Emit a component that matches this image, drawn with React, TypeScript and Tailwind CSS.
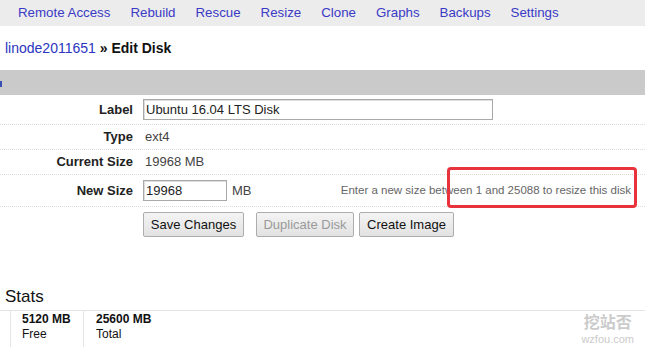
const navItems = ["Remote Access", "Rebuild", "Rescue", "Resize", "Clone", "Graphs", "Backups", "Settings"];

function Row({ label, children, className }: { label: string; children: React.ReactNode; className: string }) {
  return (
    <div className={`flex items-center border-b border-dotted border-[#dcdcdc] ${className}`}>
      <div className="w-[133px] shrink-0 text-right text-[13px] font-bold text-[#222]">{label}</div>
      <div className="flex flex-1 items-center pl-[10px] text-[13px] text-[#444]">{children}</div>
    </div>
  );
}

function Btn({ children, disabled, w }: { children: React.ReactNode; disabled?: boolean; w: string }) {
  return (
    <button
      disabled={disabled}
      className={`h-[25px] rounded-[2px] border border-[#adadad] bg-gradient-to-b from-[#f4f4f4] to-[#e2e2e2] text-[13px] ${w} ${
        disabled ? "text-[#9a9a9a]" : "text-[#111]"
      }`}
    >
      {children}
    </button>
  );
}

export default function App() {
  return (
    <main className="relative h-[347px] w-[645px] overflow-hidden bg-white font-['Liberation_Sans',Arial,sans-serif]">
      <nav className="flex h-[26px] items-center gap-[20px] bg-[#ececec] pl-[18px] text-[13.3px] text-[#3a3ac6]">
        {navItems.map((n) => (
          <span key={n}>{n}</span>
        ))}
      </nav>

      <div className="mt-[13px] pl-[5px] text-[14px] leading-[18px]">
        <span className="text-[#2b35c0]">linode2011651</span>
        <span className="font-bold text-[#111]"> » Edit Disk</span>
      </div>

      <div className="mt-[13px] flex h-[25px] items-center bg-[#cacaca]">
        <div className="mt-[2px] h-[6px] w-[2px] bg-[#3a4fb0]" />
      </div>

      <Row label="Label" className="h-[30px]">
        <div className="flex h-[21px] w-[350px] items-center border border-[#a9a9a9] px-[2px] text-[13px] text-[#222] shadow-[inset_1px_1px_0_#ddd]">
          Ubuntu 16.04 LTS Disk
        </div>
      </Row>
      <Row label="Type" className="h-[25px]">
        <span className="pl-[2px]">ext4</span>
      </Row>
      <Row label="Current Size" className="h-[25px]">
        <span className="pl-[2px]">19968 MB</span>
      </Row>
      <Row label="New Size" className="h-[32px]">
        <div className="flex h-[21px] w-[84px] items-center border border-[#a9a9a9] px-[2px] text-[13px] text-[#222] shadow-[inset_1px_1px_0_#ddd]">
          19968
        </div>
        <span className="ml-[5px]">MB</span>
        <span className="ml-auto pr-[14px] text-[11.5px] text-[#666]">
          Enter a new size between 1 and 25088 to resize this disk
        </span>
      </Row>

      <div className="mt-[5px] flex gap-[12px] pl-[143px]">
        <Btn w="w-[101px]">Save Changes</Btn>
        <div className="flex gap-[5px]">
          <Btn disabled w="w-[98px]">
            Duplicate Disk
          </Btn>
          <Btn w="w-[95px]">Create Image</Btn>
        </div>
      </div>

      <div className="absolute left-[447px] top-[167px] h-[41px] w-[190px] rounded-[4px] border-[3px] border-[#e8333d]" />

      <h2 className="mt-[50px] pl-[5px] text-[17px] leading-[20px] text-[#111]">Stats</h2>
      <div className="mt-[3px] border-t border-[#e4e4e4]">
        <div className="flex pl-[10px]">
          <div className="w-[73px] border-l border-[#e6e6e6] pb-[6px] pl-[11px] pt-[1px] text-[12px] leading-[15px] text-[#111]">
            <div className="font-bold">5120 MB</div>
            <div>Free</div>
          </div>
          <div className="border-l border-[#e6e6e6] pb-[6px] pl-[12px] pt-[1px] text-[12px] leading-[15px] text-[#111]">
            <div className="font-bold">25600 MB</div>
            <div>Total</div>
          </div>
        </div>
      </div>

      <div className="absolute right-[11px] top-[310px] flex flex-col items-center gap-[1px] text-[#cbcbcb]">
        <span className="text-[16px] font-bold leading-[22px] font-['Noto_Sans_CJK_SC',sans-serif]">挖站否</span>
        <span className="text-[11px] leading-[13px]">wzfou.com</span>
      </div>
    </main>
  );
}
